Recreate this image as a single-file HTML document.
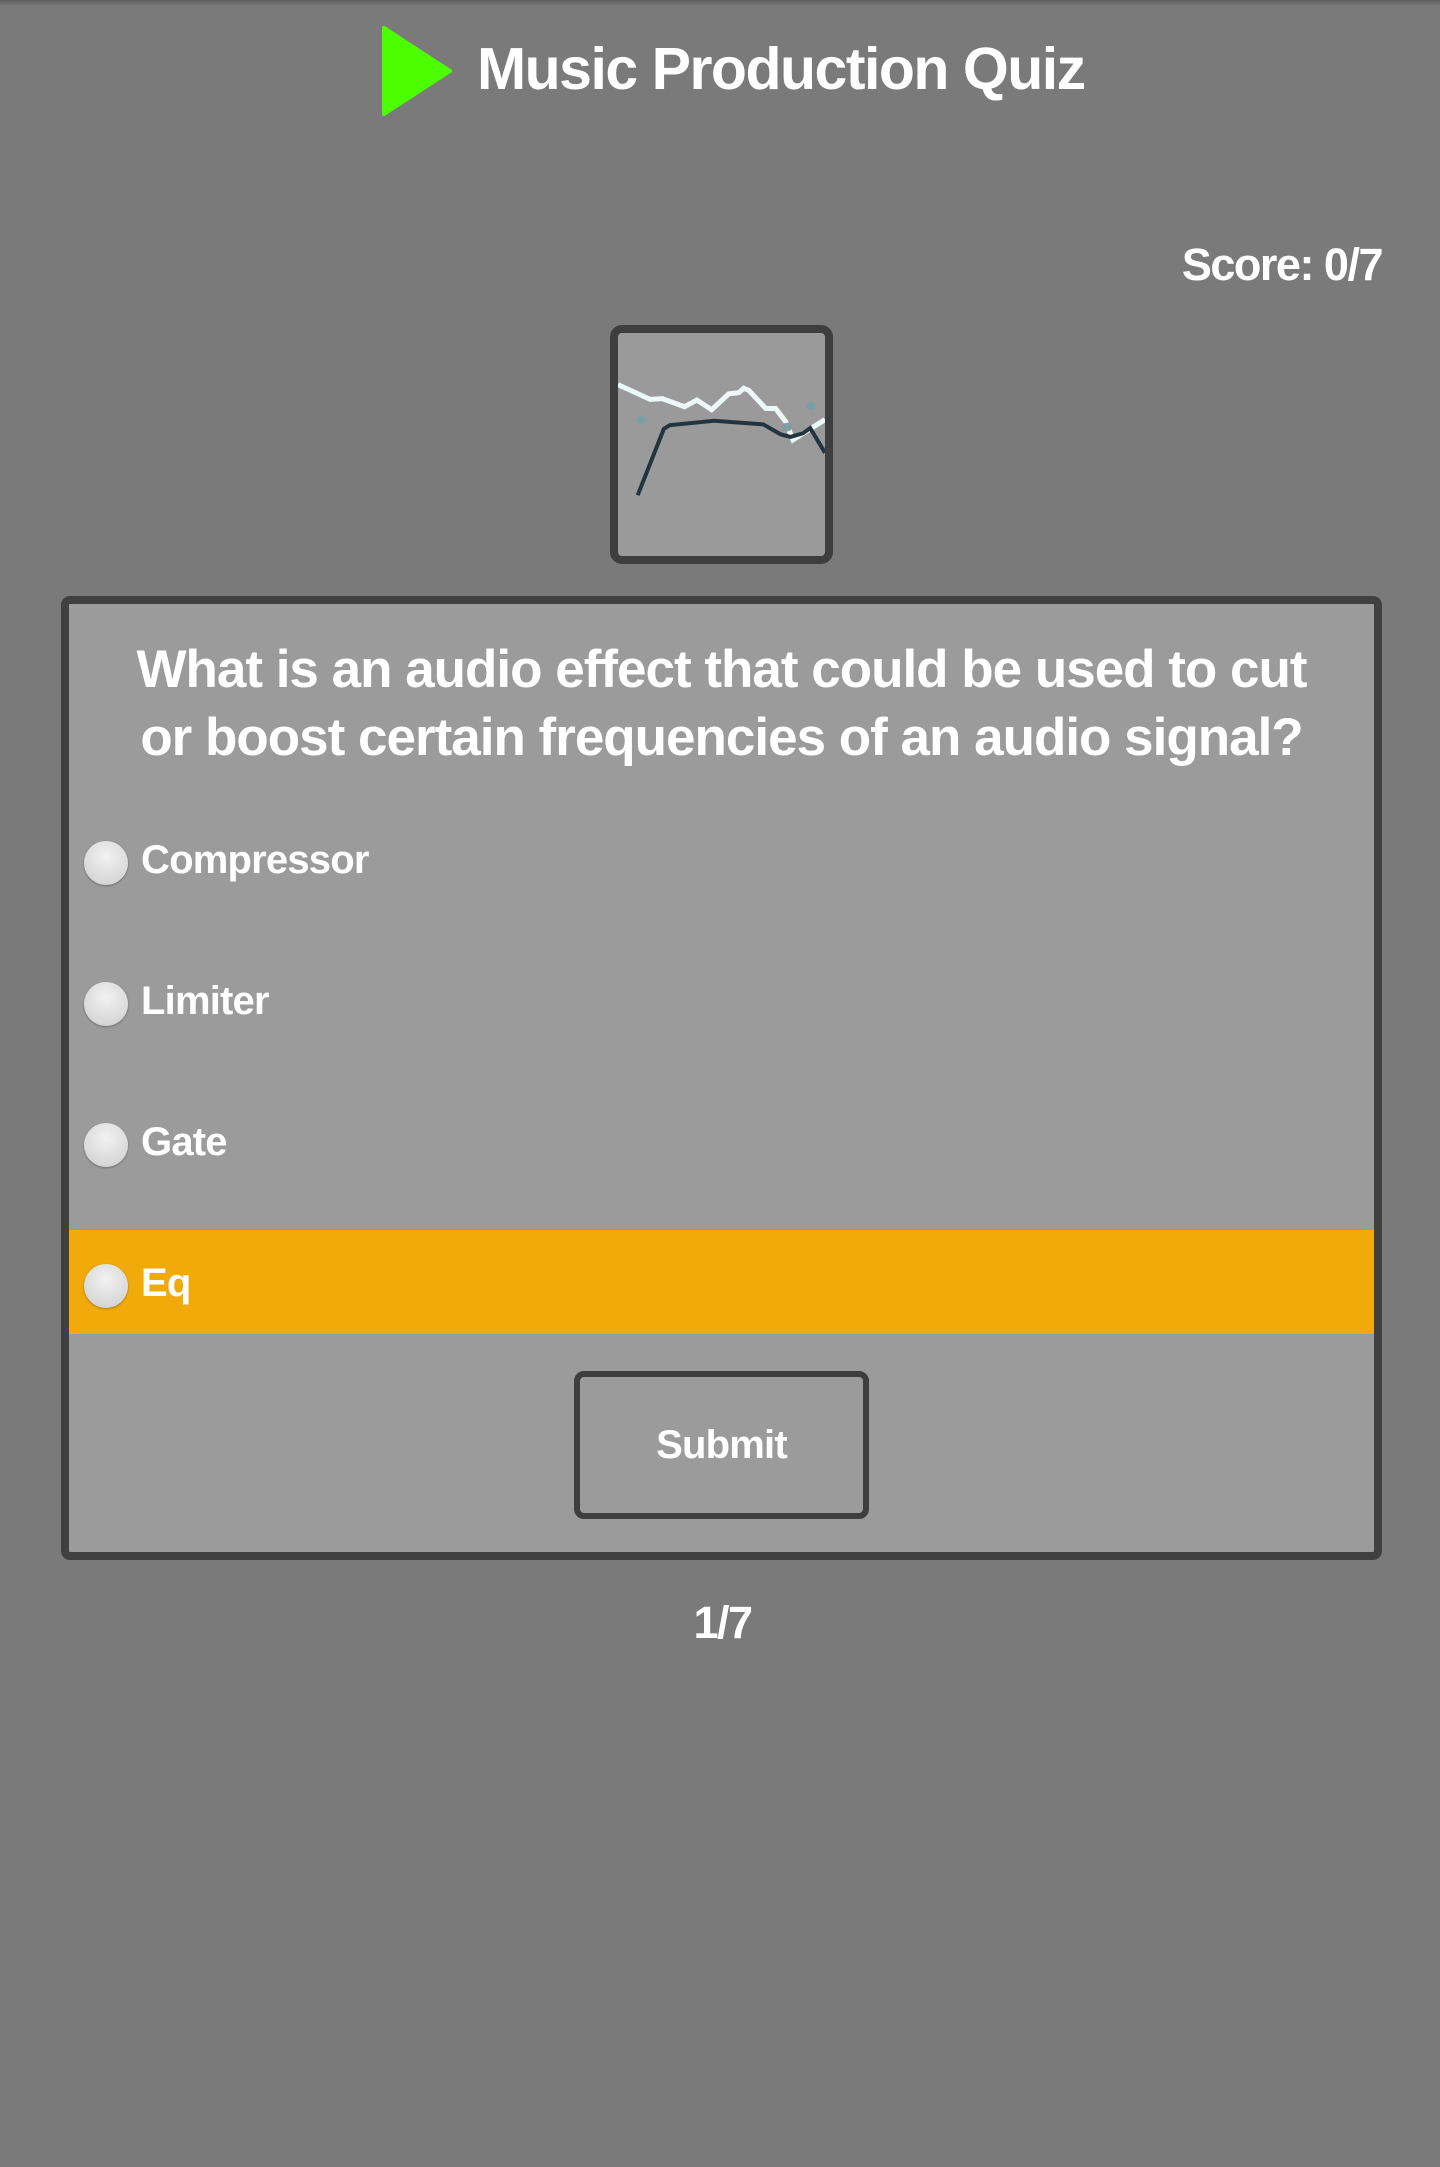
<!DOCTYPE html>
<html><head><meta charset="utf-8"><style>
html,body{margin:0;padding:0}
body{width:1440px;height:2167px;background:#7a7a7a;position:relative;overflow:hidden;font-family:"Liberation Sans",sans-serif;color:#fff;font-weight:bold}
.a{position:absolute}
.t{white-space:nowrap;line-height:1}
.radio{position:absolute;left:84px;width:44px;height:44px;border-radius:50%;background:radial-gradient(circle at 50% 35%,#f2f2f2,#d8d8d8 70%,#c8c8c8);box-shadow:0 1px 2px rgba(0,0,0,.3)}
.opt{position:absolute;left:141px;font-size:40px;line-height:1;white-space:nowrap;letter-spacing:-0.8px}
</style></head><body>
<div class="a" style="left:0;top:0;width:1440px;height:6px;background:linear-gradient(#5e5e5e,#7a7a7a)"></div>
<svg class="a" style="left:380px;top:24px" width="74" height="94" viewBox="0 0 74 94"><path d="M4 4 L70 47 L4 90 Z" fill="#4cff00" stroke="#4cff00" stroke-width="4" stroke-linejoin="round"/></svg>
<div class="a t" style="left:477px;top:40px;font-size:59px;letter-spacing:-1.5px">Music Production Quiz</div>
<div class="a t" style="right:58px;top:242px;font-size:45px;letter-spacing:-1.5px">Score: 0/7</div>
<div class="a" style="left:610px;top:325px;width:207px;height:223px;border:8px solid #3e3e3e;border-radius:12px;background:#9a9a9a"></div>
<svg class="a" style="left:618px;top:333px" width="207" height="223" viewBox="535 900 420 605" preserveAspectRatio="none">
<polyline points="535,1040 600,1080 625,1078 670,1100 695,1082 725,1108 760,1065 780,1062 790,1050 800,1055 835,1105 855,1105 875,1140 890,1190 925,1160 955,1135" fill="none" stroke="#eef8f8" stroke-width="5" vector-effect="non-scaling-stroke"/>
<polyline points="575,1340 628,1160 640,1150 730,1138 830,1148 865,1175 885,1182 910,1172 925,1158 955,1225" fill="none" stroke="#24343f" stroke-width="4" vector-effect="non-scaling-stroke"/>
<ellipse cx="582" cy="1135" rx="10" ry="12" fill="#7f9ea3"/>
<ellipse cx="878" cy="1155" rx="10" ry="12" fill="#7f9ea3"/>
<ellipse cx="927" cy="1098" rx="10" ry="12" fill="#7f9ea3"/>
</svg>
<div class="a" style="left:61px;top:596px;width:1305px;height:948px;border:8px solid #404040;border-radius:9px;background:#9b9b9b"></div>
<div class="a" style="left:69px;top:636px;width:1305px;text-align:center;font-size:53px;line-height:68px;letter-spacing:-1px">What is an audio effect that could be used to cut<br>or boost certain frequencies of an audio signal?</div>
<div class="radio" style="top:841px"></div><div class="opt" style="top:840px">Compressor</div>
<div class="radio" style="top:982px"></div><div class="opt" style="top:981px">Limiter</div>
<div class="radio" style="top:1123px"></div><div class="opt" style="top:1122px">Gate</div>
<div class="a" style="left:69px;top:1230px;width:1305px;height:104px;background:#f0aa0a"></div>
<div class="radio" style="top:1264px"></div><div class="opt" style="top:1263px">Eq</div>
<div class="a" style="left:574px;top:1371px;width:283px;height:136px;border:6px solid #3e3e3e;border-radius:10px;text-align:center;line-height:136px;font-size:40px;letter-spacing:-0.8px">Submit</div>
<div class="a t" style="left:0;width:1445px;top:1600px;text-align:center;font-size:45px;letter-spacing:-1.5px">1/7</div>
</body></html>
